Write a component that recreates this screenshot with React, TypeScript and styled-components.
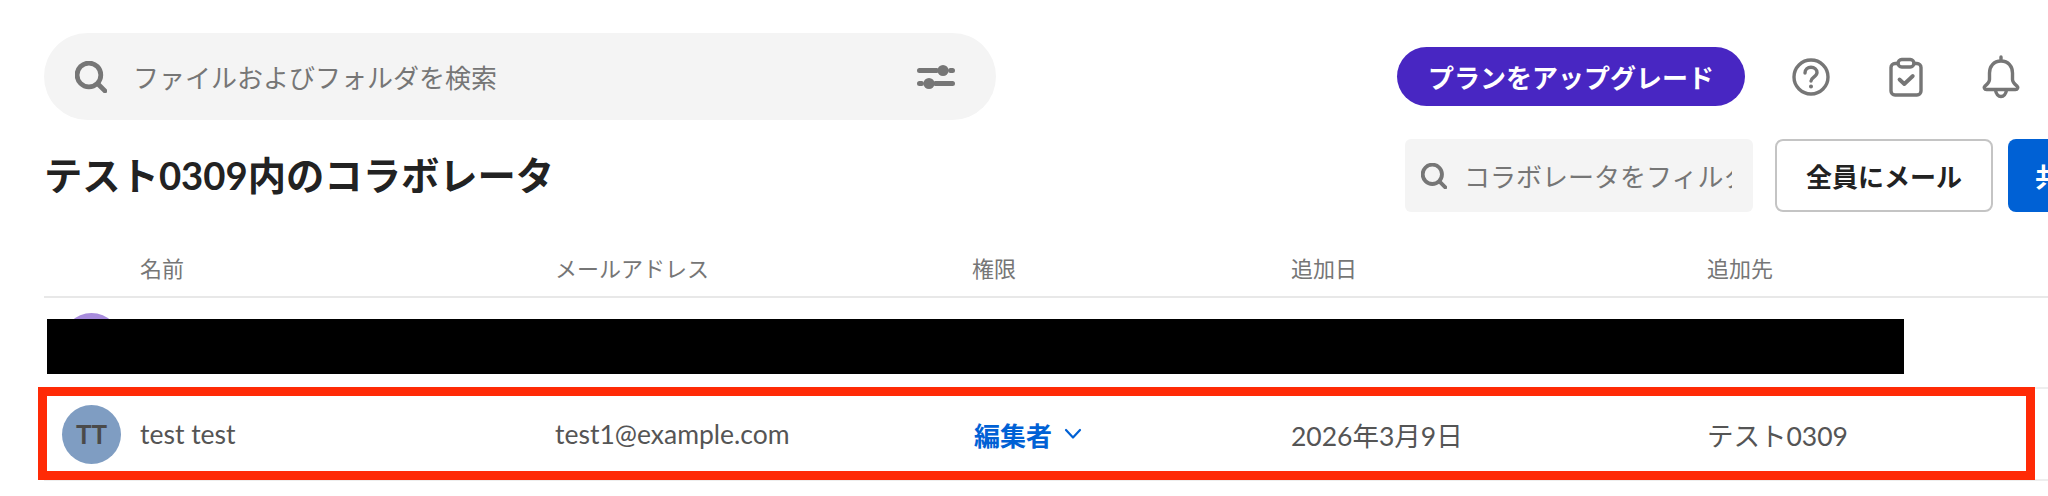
import { createGlobalStyle, styled } from 'styled-components';

const GlobalStyle = createGlobalStyle`
    html, body {
        margin: 0;
        padding: 0;
        background: #ffffff;
        overflow: hidden;
    }

    body {
        font-family: Lato, "Noto Sans CJK JP", sans-serif;
        color: #222222;
    }
`;

const Page = styled.div`
    width: 2048px;
    height: 496px;
    overflow: hidden;
    padding-top: 33px;
    box-sizing: border-box;
`;

const TopBar = styled.header`
    display: flex;
    align-items: center;
    justify-content: space-between;
    padding: 0 27px 0 44px;
    height: 87px;
`;

const GlobalSearch = styled.div`
    display: flex;
    align-items: center;
    box-sizing: border-box;
    width: 952px;
    height: 87px;
    padding: 0 41px 0 31px;
    border-radius: 44px;
    background: #f4f4f4;
    color: #767676;
    font-size: 26px;
`;

const SearchLabel = styled.span`
    flex: 1;
    margin-left: 26px;
`;

const TopActions = styled.div`
    display: flex;
    align-items: center;
`;

const UpgradeButton = styled.button`
    height: 59px;
    width: 348px;
    margin-right: 46px;
    border: 0;
    border-radius: 30px;
    background: #4826c2;
    color: #ffffff;
    font: 700 26px Lato, "Noto Sans CJK JP", sans-serif;
    padding: 0;
`;

const IconButton = styled.div`
    display: flex;
    align-items: center;
    justify-content: center;
    width: 40px;
    height: 40px;
    margin-left: ${props => (props.$first ? '0' : '55px')};
`;

const Toolbar = styled.div`
    display: flex;
    align-items: center;
    height: 73px;
    margin-top: 19px;
    padding-left: 44px;
`;

const Title = styled.h1`
    flex: 0 0 1361px;
    margin: 0 0 4px;
    font-size: 38.3px;
    font-weight: 700;
    color: #222222;
`;

const FilterBox = styled.div`
    display: flex;
    align-items: center;
    flex: 0 0 348px;
    box-sizing: border-box;
    height: 73px;
    padding: 0 16px;
    border-radius: 6px;
    background: #f4f4f4;
    color: #767676;
    font-size: 26px;
`;

const FilterLabel = styled.span`
    margin-left: 17px;
    width: 268px;
    overflow: hidden;
    white-space: nowrap;
`;

const OutlineButton = styled.button`
    flex: 0 0 218px;
    height: 73px;
    margin-left: 22px;
    padding: 0;
    border: 2px solid #c4c4c4;
    border-radius: 8px;
    background: #ffffff;
    color: #222222;
    font: 700 26px Lato, "Noto Sans CJK JP", sans-serif;
`;

const ShareButton = styled.button`
    flex: 0 0 140px;
    height: 73px;
    margin-left: 15px;
    padding: 0 0 0 27px;
    border: 0;
    border-radius: 8px;
    background: #0061d5;
    color: #ffffff;
    text-align: left;
    font: 700 26px Lato, "Noto Sans CJK JP", sans-serif;
`;

const Table = styled.section`
    margin-left: 44px;
`;

const columns = '96px 415px 417px 319px 416px 1fr';

const HeadRow = styled.div`
    display: grid;
    grid-template-columns: ${columns};
    align-items: center;
    box-sizing: border-box;
    height: 86px;
    padding-top: 25px;
    border-bottom: 2px solid #e8e8e8;
    color: #767676;
    font-size: 22px;
`;

const Row = styled.div`
    position: relative;
    display: grid;
    grid-template-columns: ${columns};
    align-items: center;
    box-sizing: border-box;
    height: ${props => props.$height}px;
    border-bottom: 2px solid #eeeeee;
    color: #555555;
    font-size: 26.5px;
`;

const Avatar = styled.div`
    display: flex;
    align-items: center;
    justify-content: center;
    width: 59px;
    height: 59px;
    margin-left: 18px;
    border-radius: 50%;
    background: ${props => props.$color};
    color: #4a4a4a;
    font-size: 26px;
    font-weight: 700;
`;

const RoleSelect = styled.div`
    display: flex;
    align-items: center;
    gap: 12px;
    padding-left: 2px;
    color: #0061d5;
    font-size: 26px;
    font-weight: 700;
`;

const Redaction = styled.div`
    position: absolute;
    left: 3px;
    top: 21px;
    width: 1857px;
    height: 55px;
    background: #000000;
`;

const Highlight = styled.div`
    position: absolute;
    left: -6px;
    top: -2px;
    width: 1997px;
    height: 93px;
    box-sizing: border-box;
    border: 9px solid #ff2a06;
`;

const Cell = styled.div`
    white-space: nowrap;
`;

const SearchIcon = ({ size }: { size: number }) => (
    <svg width={size} height={size} viewBox="0 0 31 31" fill="none" stroke="#767676" strokeLinecap="round">
        <circle cx="13.5" cy="13.5" r="11.5" strokeWidth="4.6" />
        <path d="M22.5 22.5l6.500 6.500" strokeWidth="4.6" />
    </svg>
);

const SlidersIcon = () => (
    <svg width="38" height="24" viewBox="0 0 38 24" fill="#767676" stroke="#767676" strokeLinecap="round">
        <path d="M2.500 5.500h17M33.500 5.500h2M2.500 18.500h2M18.500 18.500h17" strokeWidth="5" fill="none" />
        <circle cx="26" cy="5.5" r="5.500" stroke="none" />
        <circle cx="12" cy="18.5" r="5.500" stroke="none" />
    </svg>
);

const HelpIcon = () => (
    <svg width="40" height="40" viewBox="0 0 40 40" fill="none" stroke="#767676" strokeWidth="3.4" strokeLinecap="round" strokeLinejoin="round">
        <circle cx="20" cy="20" r="17" />
        <path d="M14 16c0-3.6 2.700-5.800 6-5.800s6 2.200 6 5.300c0 4.500-6 4.700-6 8.500" />
        <circle cx="20" cy="29.500" r="1.300" fill="#767676" strokeWidth="1.400" />
    </svg>
);

const ClipboardIcon = () => (
    <svg width="40" height="40" viewBox="0 0 40 40" fill="none" stroke="#767676" strokeWidth="3.4" strokeLinecap="round" strokeLinejoin="round">
        <path d="M12 6.500H9a4 4 0 0 0-4 4V34a4 4 0 0 0 4 4h22a4 4 0 0 0 4-4V10.500a4 4 0 0 0-4-4h-3" />
        <rect x="12" y="2.500" width="16" height="7.500" rx="3.700" />
        <path d="M13.500 22.500l4.800 4.500 8.500-8" strokeWidth="3.800" />
    </svg>
);

const BellIcon = () => (
    <svg width="40" height="44" viewBox="0 0 40 44" fill="none" stroke="#767676" strokeWidth="3.4" strokeLinecap="round" strokeLinejoin="round">
        <path d="M20 2v4M20 6c-7.500 0-11.500 5.500-11.500 12v6.500c0 3-2 4.500-4.500 6.500-1.500 1.500-.5 3.500 1.500 3.500h29c2 0 3-2 1.500-3.500-2.500-2-4.500-3.500-4.500-6.500V18c0-6.500-4-12-11.500-12z" />
        <path d="M14.500 35c.5 4 3 6.500 5.500 6.500s5-2.500 5.500-6.500" />
    </svg>
);

const ChevronIcon = () => (
    <svg width="18" height="12" viewBox="0 0 18 12" fill="none" stroke="#0061d5" strokeWidth="2.200" strokeLinecap="round" strokeLinejoin="round">
        <path d="M2 2l7 7.500L16 2" />
    </svg>
);

const App = () => (
    <Page>
        <GlobalStyle />
        <TopBar>
            <GlobalSearch>
                <SearchIcon size={32} />
                <SearchLabel>ファイルおよびフォルダを検索</SearchLabel>
                <SlidersIcon />
            </GlobalSearch>
            <TopActions>
                <UpgradeButton>プランをアップグレード</UpgradeButton>
                <IconButton $first>
                    <HelpIcon />
                </IconButton>
                <IconButton>
                    <ClipboardIcon />
                </IconButton>
                <IconButton>
                    <BellIcon />
                </IconButton>
            </TopActions>
        </TopBar>
        <Toolbar>
            <Title>テスト0309内のコラボレータ</Title>
            <FilterBox>
                <SearchIcon size={26} />
                <FilterLabel>コラボレータをフィルタ</FilterLabel>
            </FilterBox>
            <OutlineButton>全員にメール</OutlineButton>
            <ShareButton>共有</ShareButton>
        </Toolbar>
        <Table>
            <HeadRow>
                <span />
                <Cell>名前</Cell>
                <Cell>メールアドレス</Cell>
                <Cell>権限</Cell>
                <Cell>追加日</Cell>
                <Cell>追加先</Cell>
            </HeadRow>
            <Row $height={91}>
                <Avatar $color="#a78bdc" />
                <Redaction />
            </Row>
            <Row $height={92}>
                <Avatar $color="#7f9dc2">TT</Avatar>
                <Cell>test test</Cell>
                <Cell>test1@example.com</Cell>
                <RoleSelect>
                    編集者
                    <ChevronIcon />
                </RoleSelect>
                <Cell>2026年3月9日</Cell>
                <Cell>テスト0309</Cell>
                <Highlight />
            </Row>
        </Table>
    </Page>
);

export default App;
